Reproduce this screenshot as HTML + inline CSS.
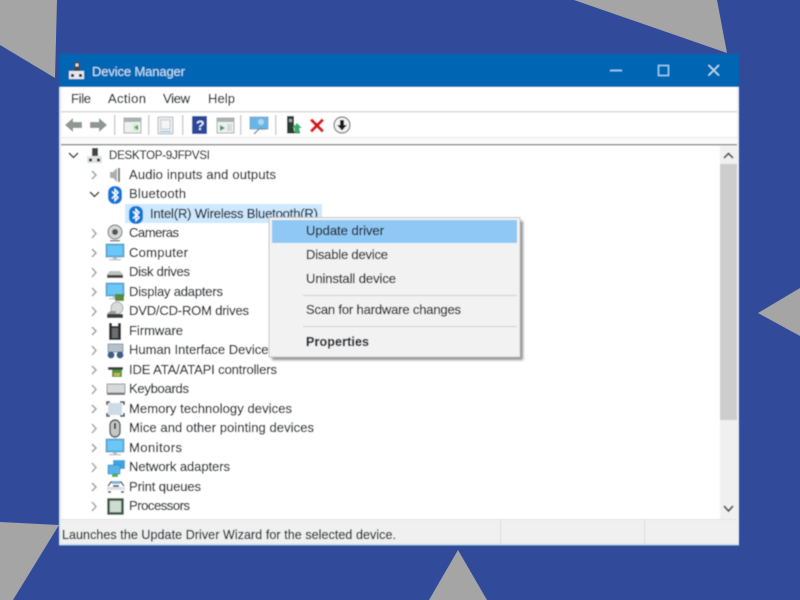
<!DOCTYPE html>
<html><head><meta charset="utf-8"><title>Device Manager</title>
<style>
html,body{margin:0;padding:0;background:#314a9a;width:800px;height:600px;overflow:hidden}
svg{display:block}
text{font-family:"Liberation Sans",sans-serif;font-size:13px;fill:#24272b;stroke:#24272b;stroke-width:0.25px}
.chev{fill:none;stroke:#a6a6a6;stroke-width:1.6}
.open{fill:none;stroke:#444;stroke-width:1.6}
</style></head><body>
<svg width="800" height="600" viewBox="0 0 800 600" xmlns="http://www.w3.org/2000/svg">
<defs>
<filter id="b" x="-5%" y="-5%" width="110%" height="110%"><feGaussianBlur stdDeviation="0.4"/></filter>
<filter id="s" x="-10%" y="-10%" width="120%" height="120%"><feGaussianBlur stdDeviation="1.3"/></filter>
<g id="bt"><rect x="-7" y="-9" width="14" height="18" rx="6.5" fill="#0f78d8"/><path d="M-3-3.5 3 2.5 0 5.5V-5.5L3-2.5-3 3.5" fill="none" stroke="#fff" stroke-width="1.3"/></g>
<g id="mon"><rect x="-9" y="-8" width="18" height="13" fill="#3fa9e8" stroke="#7aa7c4"/><rect x="-7.5" y="-6.5" width="15" height="10" fill="#6cc7f5"/><rect x="-2" y="5" width="4" height="2" fill="#aab8c2"/><rect x="-6" y="7" width="12" height="1.5" fill="#c2cad0"/></g>
</defs>
<rect width="800" height="600" fill="#314a9a"/>
<g fill="#a5a5a5">
<polygon points="0,0 57,0 55,78 0,45"/>
<polygon points="574,0 717,0 727,53"/>
<polygon points="800,288 758,313 800,336"/>
<polygon points="458,550 429,600 487,600"/>
<polygon points="0,522 59,525 13,600 0,600"/>
</g>
<g filter="url(#b)">
<!-- window -->
<rect x="59" y="54" width="680" height="491" fill="#fff"/>
<rect x="59" y="54" width="680" height="33" fill="#0566b4"/>
<rect x="59" y="87" width="2" height="458" fill="#dfe9ef"/>
<rect x="737" y="87" width="2" height="458" fill="#e9f0f4"/>
<text x="92" y="76" textLength="93" style="fill:#c6e4f7;stroke:none">Device Manager</text>
<g>
<rect x="74" y="62" width="6" height="9" fill="#444"/><rect x="75.5" y="63.5" width="3" height="3" fill="#dde"/>
<rect x="69" y="71" width="15" height="8" fill="#e4e8ec"/><rect x="71" y="74" width="3" height="3" fill="#333"/><rect x="79" y="74" width="3" height="3" fill="#333"/>
</g>
<path d="M610 70.5H622" stroke="#9fd3f3" stroke-width="1.6"/>
<rect x="658.5" y="65.5" width="10" height="10" fill="none" stroke="#9fd3f3" stroke-width="1.4"/>
<path d="M708.5 65 719 75.5M719 65 708.5 75.5" stroke="#b9e0f7" stroke-width="1.5"/>
<!-- menu -->
<text x="71" y="103" textLength="20">File</text>
<text x="108" y="103" textLength="38">Action</text>
<text x="163" y="103" textLength="27">View</text>
<text x="208" y="103" textLength="27">Help</text>
<rect x="61" y="111" width="676" height="1.5" fill="#d9d9d9"/>
<!-- toolbar -->
<rect x="61" y="137" width="676" height="1" fill="#e8e8e8"/>
<rect x="61" y="138" width="676" height="6" fill="#fafafa"/>
<rect x="61" y="144" width="676" height="1.5" fill="#8d8d8d"/>
<path d="M65 125 73 118V122H82V128H73V132Z" fill="#8f9793"/>
<path d="M107 125 99 118V122H90V128H99V132Z" fill="#8f9793"/>
<g fill="#cfcfcf"><rect x="114" y="115" width="1.5" height="20"/><rect x="148" y="115" width="1.5" height="20"/><rect x="182" y="115" width="1.5" height="20"/><rect x="240" y="115" width="1.5" height="20"/><rect x="275" y="115" width="1.5" height="20"/></g>
<rect x="124" y="118" width="17" height="15" fill="#eef1ef" stroke="#a3aba9"/><rect x="124" y="118" width="17" height="4" fill="#aab2b1"/><rect x="133" y="124" width="6" height="7" fill="#cfe8cf"/><path d="M138 125V130L134 127.500Z" fill="#3ea35b"/>
<rect x="158" y="117" width="15" height="17" rx="1" fill="#e8ecee" stroke="#b4babd"/><rect x="161" y="120" width="9" height="9" fill="#f5f5f5" stroke="#c6cbcd"/><rect x="160" y="131" width="11" height="1.500" fill="#9bcdeb"/>
<rect x="192" y="116" width="15" height="18" fill="#2a4a9e"/><text x="196" y="130" style="font-size:14px;font-weight:bold;fill:#e8eef8;stroke:none">?</text>
<rect x="217" y="118" width="17" height="15" fill="#eef1ef" stroke="#a3aba9"/><rect x="217" y="118" width="17" height="4" fill="#aab2b1"/><path d="M220 125V131L225 128Z" fill="#3ea35b"/><rect x="227" y="124" width="5" height="7" fill="#d5dade"/>
<rect x="250" y="117" width="18" height="12" fill="#69b6e6" stroke="#7aa8c6"/><circle cx="261" cy="122" r="3" fill="#a8d8f2"/><path d="M259 129 254 134M259 129H266" stroke="#6f8a96" stroke-width="1.300" fill="none"/>
<rect x="287" y="116" width="7" height="17" fill="#2f3a33"/><rect x="289" y="119" width="3" height="3" fill="#9aa"/><rect x="287" y="131" width="13" height="2.500" fill="#2f3a33"/><path d="M297 123 302 128H299.500V133H294.500V128H292Z" fill="#35b06a"/>
<path d="M311 119.500 323 131.500M323 119.500 311 131.500" stroke="#d8131c" stroke-width="3.200"/>
<circle cx="342" cy="125" r="8" fill="#f4f4f4" stroke="#777" stroke-width="1.200"/><path d="M340 120H344V125H347L342 130.500 337 125H340Z" fill="#1c1c1c"/>
<!-- selected -->
<rect x="125" y="204" width="197" height="19" fill="#cde8ff"/>
<!-- root -->
<path d="M69 153 73.500 157.500 78 153" class="open"/>
<text x="109" y="159" textLength="101" style="font-size:11.5px">DESKTOP-9JFPVSI</text>
<rect x="92" y="148" width="6" height="8" fill="#444"/><rect x="87" y="156" width="15" height="7" fill="#dfe3e6"/><rect x="89" y="158.500" width="3" height="3" fill="#333"/><rect x="97" y="158.500" width="3" height="3" fill="#333"/>
<!-- chevrons -->
<g class="chev">
<path d="M92 171 96 175 92 179"/><path d="M92 229 96 233.500 92 238"/><path d="M92 249 96 253 92 257"/><path d="M92 268 96 272.500 92 277"/><path d="M92 288 96 292 92 296"/><path d="M92 307 96 311.500 92 316"/><path d="M92 327 96 331 92 335"/><path d="M92 346 96 350.500 92 355"/><path d="M92 366 96 370 92 374"/><path d="M92 385 96 389.500 92 394"/><path d="M92 405 96 409 92 413"/><path d="M92 424 96 428.500 92 433"/><path d="M92 444 96 448 92 452"/><path d="M92 463 96 467.500 92 472"/><path d="M92 483 96 487 92 491"/><path d="M92 502 96 506.500 92 511"/>
</g>
<path d="M90 192 94.500 196.500 99 192" class="open"/>
<!-- labels -->
<text x="129" y="179" textLength="147">Audio inputs and outputs</text>
<text x="129" y="198" textLength="57">Bluetooth</text>
<text x="150" y="218" textLength="168">Intel(R) Wireless Bluetooth(R)</text>
<text x="129" y="237" textLength="50">Cameras</text>
<text x="129" y="257" textLength="59">Computer</text>
<text x="129" y="276" textLength="61">Disk drives</text>
<text x="129" y="296" textLength="94">Display adapters</text>
<text x="129" y="315" textLength="120">DVD/CD-ROM drives</text>
<text x="129" y="335" textLength="54">Firmware</text>
<text x="129" y="354" textLength="146">Human Interface Devices</text>
<text x="129" y="374" textLength="148">IDE ATA/ATAPI controllers</text>
<text x="129" y="393" textLength="60">Keyboards</text>
<text x="129" y="413" textLength="163">Memory technology devices</text>
<text x="129" y="432" textLength="185">Mice and other pointing devices</text>
<text x="129" y="452" textLength="53">Monitors</text>
<text x="129" y="471" textLength="101">Network adapters</text>
<text x="129" y="491" textLength="72">Print queues</text>
<text x="129" y="510" textLength="61">Processors</text>
<!-- tree icons -->
<path d="M110 172H113L117 168V182L113 178H110Z" fill="#a9adad"/><rect x="118" y="168" width="2" height="14" fill="#777"/>
<use href="#bt" x="115" y="195"/>
<use href="#bt" x="136" y="215"/>
<circle cx="115" cy="232" r="7" fill="#d5d8d6" stroke="#6b6e6c"/><circle cx="115" cy="232" r="3" fill="#555"/><rect x="110" y="240" width="10" height="1.500" fill="#777"/>
<use href="#mon" x="115" y="252"/>
<path d="M107 274 110 271H120L123 274V278H107Z" fill="#bfc3c3"/><rect x="107" y="275" width="16" height="3" fill="#444"/>
<use href="#mon" x="115" y="291"/><rect x="115" y="294" width="9" height="7" fill="#5a8a3a"/>
<circle cx="117" cy="308" r="6" fill="#d8dadb" stroke="#aaa"/><rect x="107" y="314" width="16" height="4" fill="#3c3f41"/><path d="M107 314 110 311H116V314Z" fill="#9a9d9f"/>
<rect x="109" y="323" width="12" height="17" fill="#2f3133"/><rect x="112" y="323" width="6" height="3" fill="#fff"/><rect x="112" y="328" width="6" height="10" fill="#6b6e70"/>
<rect x="108" y="344" width="15" height="8" fill="#b4c0cc" stroke="#8c98a4"/><circle cx="111" cy="355" r="3.500" fill="#3b5f88"/><circle cx="120" cy="355" r="3.500" fill="#3b5f88"/>
<rect x="108" y="367" width="15" height="3" fill="#3c4a3f"/><rect x="112" y="370" width="10" height="7" fill="#4f9a4a"/><rect x="114" y="373" width="6" height="3" fill="#d5b53a"/>
<rect x="107" y="384" width="18" height="9" fill="#d6d9da" stroke="#8f9496"/><rect x="107" y="393" width="18" height="2" fill="#777"/>
<rect x="108" y="403" width="14" height="12" rx="2" fill="#ccdbe8"/><path d="M110 402H107V405M120 402H124V405M107 413V416H110M124 413V416H120" stroke="#333" stroke-width="1.500" fill="none"/>
<rect x="110" y="420" width="10" height="17" rx="5" fill="#c4c6c8" stroke="#4c4f52" stroke-width="1.400"/><rect x="114" y="423" width="2" height="6" fill="#444"/>
<use href="#mon" x="115" y="447"/>
<rect x="113" y="460" width="12" height="9" fill="#3fa3e2"/><rect x="108" y="465" width="12" height="9" fill="#55b4e8" stroke="#3188c4" stroke-width="0.700"/><rect x="112" y="474" width="6" height="3" fill="#4fae4f"/>
<path d="M108 486 111 482H121L124 486" fill="none" stroke="#444" stroke-width="1.400"/><rect x="112" y="481" width="8" height="3" fill="#7fb6d8"/><rect x="107" y="487" width="18" height="3" fill="#dde"/><path d="M108 492H111M121 492H124M113 486H119" stroke="#333" stroke-width="1.400"/>
<rect x="108.500" y="499.500" width="14" height="14" fill="#cfdcd2" stroke="#37553f" stroke-width="2.500"/>
<!-- scrollbar -->
<rect x="720" y="146" width="17" height="373" fill="#f0f0f0"/>
<rect x="720" y="164" width="17" height="256" fill="#cdcdcd"/>
<path d="M724 158 728.500 153.500 733 158M724 506 728.500 511 733 506" fill="none" stroke="#505050" stroke-width="1.800"/>
<!-- status -->
<rect x="61" y="519" width="676" height="25" fill="#f0f0f0"/>
<rect x="61" y="519" width="676" height="1" fill="#e4e4e4"/>
<rect x="59" y="544" width="680" height="1.500" fill="#b8d8ea"/>
<rect x="500" y="520" width="1" height="24" fill="#dcdcdc"/><rect x="644" y="520" width="1" height="24" fill="#dcdcdc"/>
<text x="62" y="539" textLength="334" style="font-size:12.5px">Launches the Update Driver Wizard for the selected device.</text>
<!-- context menu -->
<rect x="272" y="221" width="251" height="139" fill="#444" opacity="0.6" filter="url(#s)"/>
<rect x="269" y="217.500" width="251" height="139.500" fill="#f2f2f2" stroke="#c4c4c4"/>
<rect x="272" y="220" width="245" height="23" fill="#90c8f5"/>
<rect x="303" y="295" width="214" height="1" fill="#d0d0d0"/>
<rect x="303" y="326" width="214" height="1" fill="#d0d0d0"/>
<text x="306" y="235" textLength="78">Update driver</text>
<text x="306" y="259" textLength="82">Disable device</text>
<text x="306" y="283" textLength="90">Uninstall device</text>
<text x="306" y="314" textLength="155">Scan for hardware changes</text>
<text x="306" y="346" textLength="63" style="font-weight:bold;font-size:12.5px">Properties</text>
</g>
</svg>
</body></html>
